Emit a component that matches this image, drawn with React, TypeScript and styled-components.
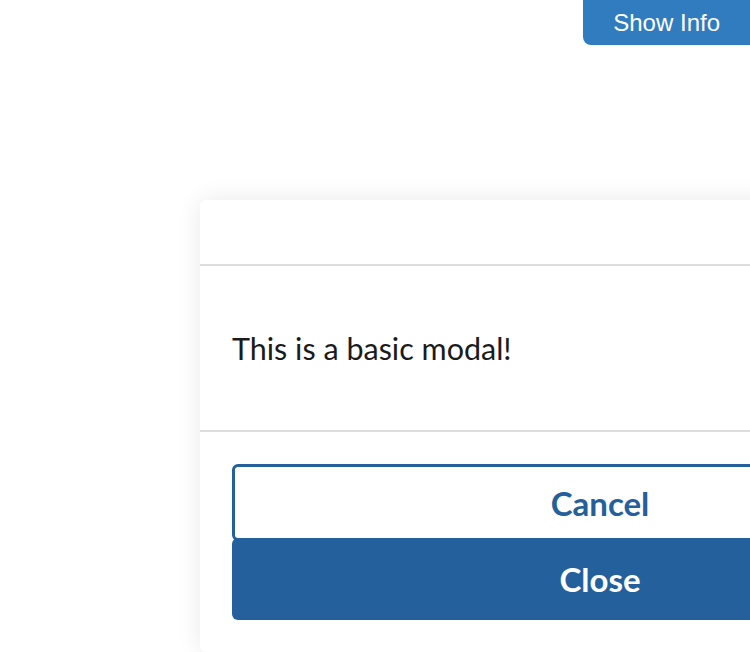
import React from "react";
import styled, { createGlobalStyle } from "styled-components";

const Global = createGlobalStyle`
  html, body { margin: 0; padding: 0; background: #ffffff; }
  body { width: 750px; height: 652px; overflow: hidden; }
`;

const Page = styled.div`
  position: relative;
  width: 750px;
  height: 652px;
  overflow: hidden;
  padding: 200px 0 0 200px;
  box-sizing: border-box;
  background: #ffffff;
`;

const InfoButton = styled.button`
  position: absolute;
  top: 0;
  right: 0;
  height: 45px;
  padding: 0 30px 0 30px;
  border: none;
  border-radius: 0 0 0 8px;
  background: #317bbf;
  color: #ffffff;
  font-family: "Liberation Sans", Arial, sans-serif;
  font-size: 24px;
  line-height: 43px;
  cursor: pointer;
`;

const Modal = styled.div`
  width: 800px;
  flex: none;
  background: #ffffff;
  border-radius: 6px;
  box-shadow: 0 0 24px rgba(0, 0, 0, 0.09);
  font-family: Lato, "Noto Sans", sans-serif;
`;

const Header = styled.div`
  height: 64px;
  border-bottom: 2px solid #dddddd;
`;

const Body = styled.div`
  height: 164px;
  padding: 0 32px;
  display: flex;
  align-items: center;
  border-bottom: 2px solid #dddddd;
  font-size: 30.5px;
  color: #1b1b1b;
`;

const Footer = styled.div`
  padding: 32px 32px 32px;
  display: flex;
  flex-direction: column;
`;

const ActionButton = styled.button<{ $primary?: boolean }>`
  height: ${(p) => (p.$primary ? "82px" : "77px")};
  margin-top: ${(p) => (p.$primary ? "-3px" : "0")};
  border-radius: 6px;
  border: ${(p) => (p.$primary ? "none" : "3px solid #23609c")};
  background: ${(p) => (p.$primary ? "#23609c" : "#ffffff")};
  color: ${(p) => (p.$primary ? "#ffffff" : "#23609c")};
  font-family: Lato, "Noto Sans", sans-serif;
  font-weight: 700;
  font-size: 33px;
  cursor: pointer;
`;

export default function App() {
  return (
    <>
      <Global />
      <Page>
        <Modal>
          <Header />
          <Body>This is a basic modal!</Body>
          <Footer>
            <ActionButton>Cancel</ActionButton>
            <ActionButton $primary>Close</ActionButton>
          </Footer>
        </Modal>
        <InfoButton>Show Info</InfoButton>
      </Page>
    </>
  );
}
